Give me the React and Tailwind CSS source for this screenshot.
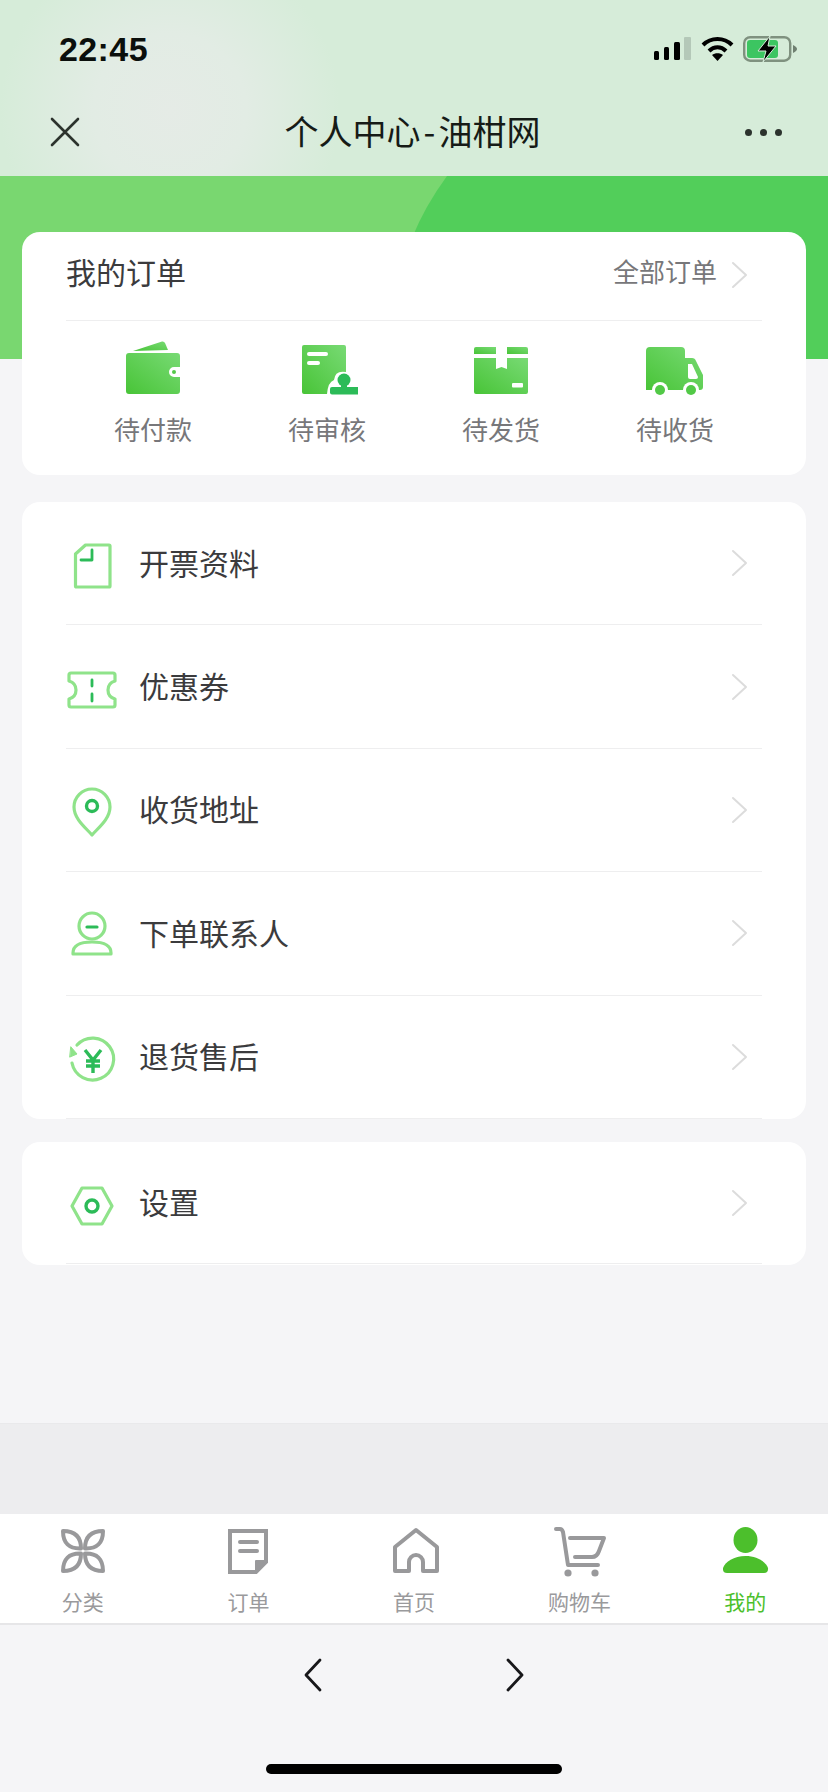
import React from "react";

const L = "#8fe38a";
const D = "#2cbb58";

function Grad({ id }) {
  return (
    <defs>
      <linearGradient id={id} x1="0" y1="1" x2="1" y2="0">
        <stop offset="0" stopColor="#48c437" />
        <stop offset="1" stopColor="#78da74" />
      </linearGradient>
    </defs>
  );
}

const Wallet = () => (
  <svg width="56" height="56" viewBox="0 0 56 56">
    <Grad id="g1" />
    <path d="M8 10 L37 0.5 Q39 0 40 2 L43 9 Z" fill="url(#g1)" />
    <path d="M1 15 Q1 12 4 12 H52 Q55 12 55 15 V26 H49 a5 5 0 0 0 0 10 H55 V50 Q55 53 52 53 H4 Q1 53 1 50 Z" fill="url(#g1)" />
    <circle cx="49" cy="31" r="2" fill="#55c94a" />
  </svg>
);

const Doc = () => (
  <svg width="56" height="56" viewBox="0 0 56 56" className="ml-[6px]">
    <Grad id="g2" />
    <path d="M0 6 Q0 4 2 4 H42 Q44 4 44 6 V31 Q33 29 32 39 Q26 41 25 53 H2 Q0 53 0 51 Z" fill="url(#g2)" />
    <rect x="5" y="11" width="21" height="4" rx="2" fill="#fff" />
    <rect x="5" y="20" width="13" height="4" rx="2" fill="#fff" />
    <circle cx="42" cy="39" r="6.5" fill={D} />
    <rect x="39" y="41" width="6" height="6" fill={D} />
    <rect x="28" y="46" width="30" height="7.5" rx="2" fill={D} />
  </svg>
);

const Box = () => (
  <svg width="56" height="56" viewBox="0 0 56 56">
    <Grad id="g3" />
    <path d="M1 8 Q1 6 3 6 H23 V13 H1 Z" fill="url(#g3)" />
    <path d="M34 6 H53 Q55 6 55 8 V13 H34 Z" fill="url(#g3)" />
    <path d="M1 17 H23 V28 L28.5 26 L34 28 V17 H55 V51 Q55 53 53 53 H3 Q1 53 1 51 Z" fill="url(#g3)" />
    <rect x="39" y="42" width="11" height="4.5" rx="1" fill="#fff" />
  </svg>
);

const Truck = () => (
  <svg width="60" height="56" viewBox="0 0 60 56">
    <Grad id="g4" />
    <path d="M1 10 Q1 6 5 6 H36 Q40 6 40 10 V17 H47 Q50 17 51 20 L58 34 V46 Q58 49 55 49 H1 V10 Z" fill="url(#g4)" />
    <path d="M43 23 H47 L53 36 Q53 38 51 38 H45 Q43 38 43 36 Z" fill="#fff" />
    <circle cx="15" cy="49" r="8" fill="#fff" />
    <circle cx="46" cy="49" r="8" fill="#fff" />
    <circle cx="15" cy="49" r="5" fill="#52c947" />
    <circle cx="46" cy="49" r="5" fill="#52c947" />
  </svg>
);

const iconBase = { fill: "none", strokeWidth: 3.2, strokeLinejoin: "round", strokeLinecap: "round" };

const FileI = () => (
  <svg width="52" height="52" viewBox="0 0 52 52" {...iconBase}>
    <path d="M9.5 14 L19.5 5 H43 Q44 5 44 6 V46 Q44 47 43 47 H10.5 Q9.5 47 9.5 46 Z" stroke={L} />
    <path d="M15 20 H26 V10" stroke={D} strokeWidth="2.8" />
  </svg>
);
const CouponI = () => (
  <svg width="52" height="52" viewBox="0 0 52 52" {...iconBase}>
    <path d="M5 9 H47 Q49 9 49 11 V17 Q42 19 42 26 Q42 33 49 35 V41 Q49 43 47 43 H5 Q3 43 3 41 V35 Q10 33 10 26 Q10 19 3 17 V11 Q3 9 5 9 Z" stroke={L} />
    <path d="M26 16 V22 M26 30 V37" stroke={D} strokeWidth="2.8" />
  </svg>
);
const PinI = () => (
  <svg width="52" height="52" viewBox="0 0 52 52" {...iconBase}>
    <path d="M26 48 C20 41 8 32 8 20 A18 18 0 0 1 44 20 C44 32 32 41 26 48 Z" stroke={L} />
    <circle cx="26" cy="19" r="5.5" stroke={D} strokeWidth="3.4" />
  </svg>
);
const PersonI = () => (
  <svg width="52" height="52" viewBox="0 0 52 52" {...iconBase}>
    <circle cx="26" cy="16" r="13" stroke={L} />
    <path d="M21 17 H31" stroke={D} />
    <path d="M7 43 Q7 32 26 32 Q45 32 45 43 V44 H7 Z" stroke={L} />
  </svg>
);
const RefundI = () => (
  <svg width="52" height="52" viewBox="0 0 52 52" {...iconBase}>
    <path d="M11 11 A21 21 0 1 1 6 29" stroke={L} />
    <path d="M5 13 L11 20 L4 23 Z" fill={L} stroke={L} strokeWidth="1" />
    <path d="M19 16 L27 26 L35 16 M20 27 H34 M20 32 H34 M27 26 V39" stroke={D} strokeWidth="3.4" strokeLinecap="butt" strokeLinejoin="miter" />
  </svg>
);
const HexI = () => (
  <svg width="52" height="52" viewBox="0 0 52 52" {...iconBase}>
    <path d="M16 8 H36 L46 26 L36 44 H16 L6 26 Z" stroke={L} />
    <circle cx="26" cy="26" r="6" stroke={D} strokeWidth="3.4" />
  </svg>
);

const Chevron = ({ color = "#dcdcdc", w = 17, h = 28, sw = 2 }) => (
  <svg width={w} height={h} viewBox="0 0 17 28" fill="none" stroke={color} strokeWidth={sw} strokeLinecap="round" strokeLinejoin="round">
    <path d="M2 2 L15 14 L2 26" />
  </svg>
);

const gray = "#99999b";
const tabStroke = { fill: "none", stroke: gray, strokeWidth: 4, strokeLinejoin: "round", strokeLinecap: "round" };

const TabCat = () => (
  <svg width="46" height="46" viewBox="0 0 46 46" {...tabStroke} className="mt-[1px]">
    {["", "translate(46 0) scale(-1 1)", "translate(0 46) scale(1 -1)", "translate(46 46) scale(-1 -1)"].map((t, i) => (
      <path key={i} transform={t} d="M3 3 C15 3 21 9 21 20.5 C9 21 3 15 3 3 Z" />
    ))}
  </svg>
);
const TabOrder = () => (
  <svg width="40" height="46" viewBox="0 0 40 46" {...tabStroke} className="mt-[2px]">
    <path d="M2 2 H38 V33 L28 43 H2 Z" strokeLinejoin="miter" />
    <path d="M28 42 V32 H38 Z" fill={gray} strokeWidth="2" />
    <path d="M12 13 H29 M12 22 H29" strokeLinecap="round" />
  </svg>
);
const TabHome = () => (
  <svg width="46" height="46" viewBox="0 0 46 46" {...tabStroke} className="ml-[4px]">
    <path d="M23 3 L44 20 V44 H30 V35 A7 7 0 0 0 16 35 V44 H2 V20 Z" />
  </svg>
);
const TabCart = () => (
  <svg width="52" height="50" viewBox="0 0 52 50" {...tabStroke}>
    <path d="M2 2 H6 Q8 2 9 5 L14 38 H44" />
    <path d="M16 11 H50 L45 24 Q43 30 38 30 H21" />
    <circle cx="14" cy="46" r="3.6" fill={gray} stroke="none" />
    <circle cx="41" cy="46" r="3.6" fill={gray} stroke="none" />
  </svg>
);
const TabMe = () => (
  <svg width="46" height="46" viewBox="0 0 46 46" fill="#4cbf2c" className="ml-[2px]">
    <ellipse cx="22.5" cy="13" rx="12" ry="13" />
    <path d="M0 41 C2 35 11 29 22.5 29 C34 29 43 35 45 41 Q45.5 46 41 46 H4 Q-0.5 46 0 41 Z" />
  </svg>
);

const orderStates = [
  { label: "待付款", Icon: Wallet },
  { label: "待审核", Icon: Doc },
  { label: "待发货", Icon: Box },
  { label: "待收货", Icon: Truck },
];

const menu = [
  { label: "开票资料", Icon: FileI },
  { label: "优惠券", Icon: CouponI },
  { label: "收货地址", Icon: PinI },
  { label: "下单联系人", Icon: PersonI },
  { label: "退货售后", Icon: RefundI },
];

const tabs = [
  { label: "分类", Icon: TabCat },
  { label: "订单", Icon: TabOrder },
  { label: "首页", Icon: TabHome },
  { label: "购物车", Icon: TabCart },
  { label: "我的", Icon: TabMe, active: true },
];

function Row({ label, Icon, height = "h-[123.4px]" }) {
  return (
    <div className={`flex ${height} items-center border-b border-[#eeeeef] pr-[14px]`}>
      <div className="mt-[6px] flex w-[52px] shrink-0 justify-center">
        <Icon />
      </div>
      <span className="mb-[3px] ml-[21px] flex-1 text-[30px] leading-[40px] text-[#3b3b3d]">{label}</span>
      <Chevron />
    </div>
  );
}

export default function App() {
  return (
    <div className="flex h-[1792px] w-[828px] flex-col overflow-hidden bg-[#f5f5f7] font-['Noto_Sans_CJK_SC','Liberation_Sans',sans-serif]">
      <header className="h-[176px] shrink-0 bg-[#d6ecd9] bg-[radial-gradient(ellipse_170px_170px_at_170px_110px,#e5ebe6_0%,#e2ece4_45%,#d6ecd9_100%)]">
        <div className="flex h-[98px] items-center justify-between pl-[59px] pr-[29px]">
          <span className="font-['Liberation_Sans',sans-serif] text-[34px] font-bold leading-[40px] tracking-[0.4px] text-[#0b0f0c]">22:45</span>
          <div className="flex items-center gap-[9px]">
            <svg width="38" height="24" viewBox="0 0 38 24">
              <rect x="0" y="14" width="5" height="9" rx="1.5" fill="#000" />
              <rect x="10" y="10" width="5" height="13" rx="1.5" fill="#000" />
              <rect x="20" y="5" width="6" height="18" rx="1.5" fill="#000" />
              <rect x="30" y="0" width="7" height="23" rx="1" fill="#b4c8b8" />
            </svg>
            <svg width="33" height="24" viewBox="0 0 33 24" fill="none" stroke="#000" strokeWidth="4">
              <path d="M2 8 C10 0 23 0 31 8" />
              <path d="M8 14 C13 9 20 9 25 14" />
              <path d="M16.5 24 L11 18 C14 15.5 19 15.5 22 18 Z" fill="#000" stroke="none" />
            </svg>
            <svg width="56" height="26" viewBox="0 0 56 26">
              <rect x="1.2" y="1.2" width="46" height="23.5" rx="6" fill="none" stroke="#7f917f" strokeWidth="2.4" />
              <rect x="4" y="4" width="31" height="18" rx="3" fill="#3cc561" />
              <path d="M50 9 Q54 11 54 13 Q54 15 50 17 Z" fill="#6f7f70" />
              <path d="M27 0 L15 15 H23 L20 26 L33 10 H25 Z" fill="#000" stroke="#d6ecd9" strokeWidth="1" />
            </svg>
          </div>
        </div>
        <div className="grid h-[68px] grid-cols-[1fr_auto_1fr] items-center px-[46px]">
          <svg className="ml-[4px]" width="30" height="30" viewBox="0 0 30 30" fill="none" stroke="#2c332d" strokeWidth="2.6" strokeLinecap="round">
            <path d="M2 2 L28 28 M28 2 L2 28" />
          </svg>
          <h1 className="mb-[3px] mr-[3px] text-[34px] font-normal leading-[44px] text-[#161b17]">
            个人中心<span className="px-[3px]">-</span>油柑网
          </h1>
          <div className="flex justify-end gap-[8px]">
            <span className="h-[7px] w-[7px] rounded-full bg-[#2c332d]" />
            <span className="h-[7px] w-[7px] rounded-full bg-[#2c332d]" />
            <span className="h-[7px] w-[7px] rounded-full bg-[#2c332d]" />
          </div>
        </div>
      </header>

      <div className="h-[183px] shrink-0 bg-[#79d770]">
        <svg width="828" height="183" viewBox="0 0 828 183" className="block">
          <path d="M447 0 Q425 30 412 62 L400 183 H828 V0 Z" fill="#52ce5a" />
        </svg>
      </div>

      <div className="mt-[-127px] flex flex-col px-[22px]">
        <section className="h-[243px] rounded-[18px] bg-white px-[44px]">
          <div className="flex h-[89px] items-center justify-between border-b border-[#eeeeef] pb-[10px] pr-[14px]">
            <span className="text-[30px] leading-[40px] text-[#3b3b3d]">我的订单</span>
            <div className="flex items-center gap-[14px]">
              <span className="text-[26px] leading-[34px] text-[#77777a]">全部订单</span>
              <span className="mt-[8px] block">
                <Chevron />
              </span>
            </div>
          </div>
          <div className="grid grid-cols-4">
            {orderStates.map(({ label, Icon }) => (
              <div key={label} className="flex flex-col items-center pt-[20px]">
                <Icon />
                <span className="mt-[15px] text-[26px] leading-[34px] text-[#77777a]">{label}</span>
              </div>
            ))}
          </div>
        </section>

        <section className="mt-[27px] h-[617px] rounded-[18px] bg-white px-[44px]">
          {menu.map((m) => (
            <Row key={m.label} {...m} />
          ))}
        </section>

        <section className="mt-[23px] h-[123px] rounded-[18px] bg-white px-[44px]">
          <Row label="设置" Icon={HexI} height="h-[122px]" />
        </section>
      </div>

      <div className="flex-1" />

      <div className="h-[91px] shrink-0 border-t border-[#e9e9eb] bg-[#ededef]" />

      <nav className="grid h-[111px] shrink-0 grid-cols-5 border-b-2 border-[#e6e6e8] bg-white">
        {tabs.map(({ label, Icon, active }) => (
          <div key={label} className="flex flex-col items-center pt-[13px]">
            <div className="flex h-[59px] items-start justify-center">
              <Icon />
            </div>
            <span className={`text-[21px] leading-[30px] ${active ? "text-[#4cbf2c]" : "text-[#9a9a9c]"}`}>{label}</span>
          </div>
        ))}
      </nav>

      <div className="flex h-[167px] shrink-0 flex-col items-center">
        <div className="mt-[33px] flex items-center gap-[184px]">
          <svg width="18" height="34" viewBox="0 0 18 34" fill="none" stroke="#17171a" strokeWidth="2.8" strokeLinecap="round" strokeLinejoin="round">
            <path d="M16 2 L2 17 L16 32" />
          </svg>
          <svg width="18" height="34" viewBox="0 0 18 34" fill="none" stroke="#17171a" strokeWidth="2.8" strokeLinecap="round" strokeLinejoin="round">
            <path d="M2 2 L16 17 L2 32" />
          </svg>
        </div>
        <div className="mt-[72px] h-[10px] w-[296px] rounded-full bg-black" />
      </div>
    </div>
  );
}
